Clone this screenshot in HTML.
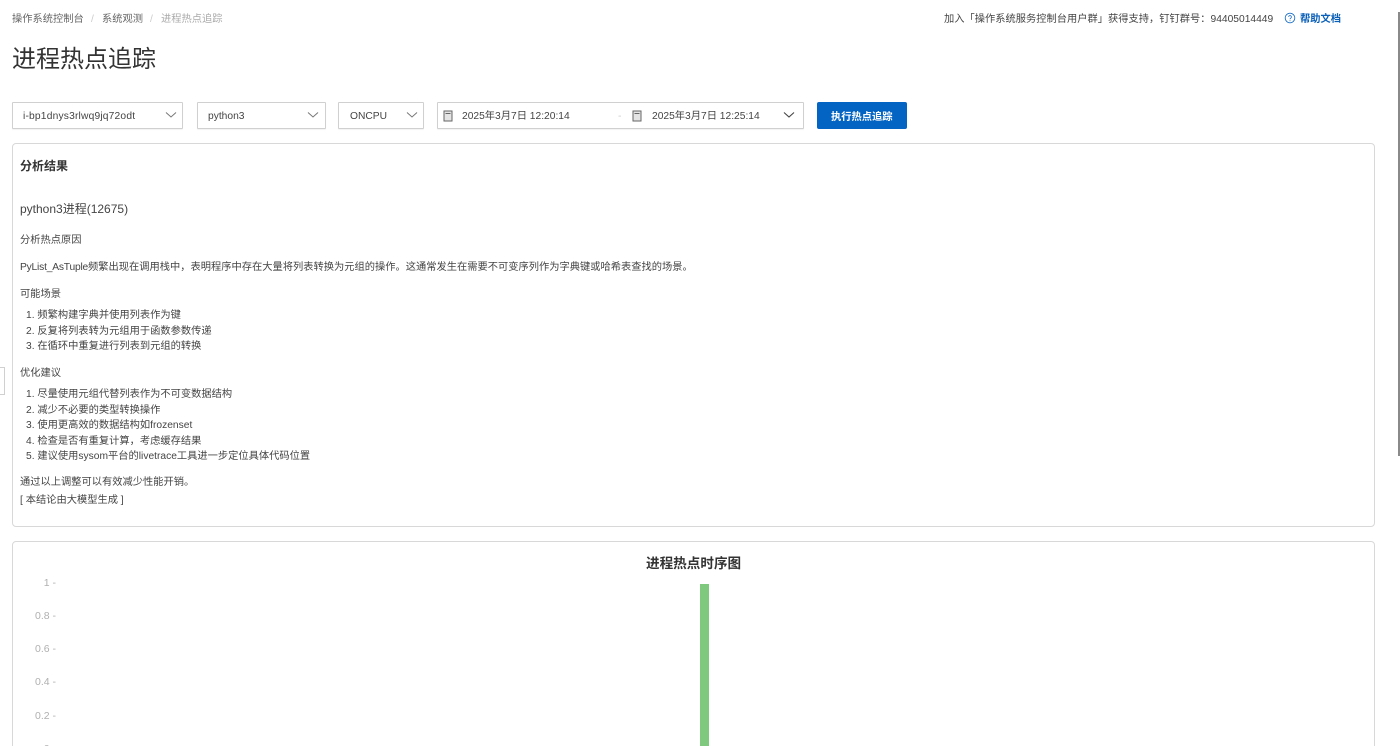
<!DOCTYPE html>
<html lang="zh-CN">
<head>
<meta charset="utf-8">
<title>进程热点追踪</title>
<style>
html,body{margin:0;padding:0;width:1400px;height:746px;overflow:hidden;background:#fff}
body{position:relative;font-family:"Liberation Sans","Noto Sans CJK SC",sans-serif;color:#333;font-size:10.25px}
.t{position:absolute;white-space:nowrap;line-height:16px;height:16px}
.box{position:absolute;box-sizing:border-box;border:1px solid #d0d0d0;background:#fff;border-radius:1px;box-shadow:0 1px 1px rgba(0,0,0,.05)}
.card{position:absolute;box-sizing:border-box;border:1px solid #d8d8d8;border-radius:4px;background:#fff}
svg{position:absolute;display:block}
.y{position:absolute;width:56px;text-align:right;color:#b0b0b0;font-size:10.5px;line-height:14px;left:0}
</style>
</head>
<body>
<div class="t" style="left:12px;top:12px;color:#666">操作系统控制台</div>
<div class="t" style="left:91px;top:12px;color:#ccc">/</div>
<div class="t" style="left:102px;top:12px;color:#666">系统观测</div>
<div class="t" style="left:150px;top:12px;color:#ccc">/</div>
<div class="t" style="left:161px;top:12px;color:#aaa">进程热点追踪</div>

<div class="t" style="left:944px;top:12px;color:#444">加入「操作系统服务控制台用户群」获得支持，钉钉群号：94405014449</div>
<svg style="left:1284px;top:12px" width="12" height="12" viewBox="0 0 12 12"><circle cx="6" cy="6" r="4.8" fill="none" stroke="#1b6fc9" stroke-width=".9"/><path d="M4.6 4.9a1.4 1.4 0 1 1 2.2 1.2c-.5.3-.8.6-.8 1.1" fill="none" stroke="#1b6fc9" stroke-width=".8"/><circle cx="6" cy="8.7" r=".5" fill="#1b6fc9"/></svg>
<div class="t" style="left:1300px;top:12px;color:#0a5fb8;font-weight:700">帮助文档</div>

<div class="t" style="left:12px;top:44px;font-size:24px;line-height:32px;height:32px;color:#333">进程热点追踪</div>

<div class="box" style="left:12px;top:102px;width:171px;height:27px"></div>
<div class="t" style="left:23px;top:109px;color:#444;letter-spacing:.18px">i-bp1dnys3rlwq9jq72odt</div>
<svg style="left:165px;top:111px" width="12" height="8" viewBox="0 0 12 8"><path d="M1 1.5l5 4.5 5-4.5" fill="none" stroke="#777" stroke-width="1"/></svg>

<div class="box" style="left:197px;top:102px;width:129px;height:27px"></div>
<div class="t" style="left:208px;top:109px;color:#444">python3</div>
<svg style="left:307px;top:111px" width="12" height="8" viewBox="0 0 12 8"><path d="M1 1.5l5 4.5 5-4.5" fill="none" stroke="#777" stroke-width="1"/></svg>

<div class="box" style="left:338px;top:102px;width:86px;height:27px"></div>
<div class="t" style="left:350px;top:109px;color:#444">ONCPU</div>
<svg style="left:406px;top:111px" width="12" height="8" viewBox="0 0 12 8"><path d="M1 1.5l5 4.5 5-4.5" fill="none" stroke="#777" stroke-width="1"/></svg>

<div class="box" style="left:437px;top:102px;width:367px;height:27px"></div>
<svg style="left:443px;top:110px" width="10" height="12" viewBox="0 0 10 12"><rect x="1" y="1" width="8" height="10" fill="#e4e4e4" stroke="#666" stroke-width="1"/><path d="M2.5 3.5h5" stroke="#666" stroke-width="1"/></svg>
<div class="t" style="left:462px;top:109px;color:#444">2025年3月7日 12:20:14</div>
<div class="t" style="left:618px;top:109px;color:#ccc">-</div>
<svg style="left:632px;top:110px" width="10" height="12" viewBox="0 0 10 12"><rect x="1" y="1" width="8" height="10" fill="#e4e4e4" stroke="#666" stroke-width="1"/><path d="M2.5 3.5h5" stroke="#666" stroke-width="1"/></svg>
<div class="t" style="left:652px;top:109px;color:#444">2025年3月7日 12:25:14</div>
<svg style="left:783px;top:111px" width="12" height="8" viewBox="0 0 12 8"><path d="M1 1.5l5 4.5 5-4.5" fill="none" stroke="#444" stroke-width="1.1"/></svg>

<div style="position:absolute;left:817px;top:102px;width:90px;height:27px;background:#0364c3;border-radius:2px"></div>
<div class="t" style="left:831px;top:110px;color:#fff;font-weight:700">执行热点追踪</div>

<div class="card" style="left:12px;top:143px;width:1363px;height:384px"></div>
<div class="t" style="left:20px;top:158px;font-size:12px;font-weight:700;color:#333">分析结果</div>
<div class="t" style="left:20px;top:201px;font-size:12px;color:#444">python3进程(12675)</div>
<div class="t" style="left:20px;top:233px;color:#444">分析热点原因</div>
<div class="t" style="left:20px;top:260px;color:#444"><span style="letter-spacing:-.2px">PyList_AsTuple</span>频繁出现在调用栈中，表明程序中存在大量将列表转换为元组的操作。这通常发生在需要不可变序列作为字典键或哈希表查找的场景。</div>
<div class="t" style="left:20px;top:287px;color:#444">可能场景</div>
<div class="t" style="left:26px;top:308px;color:#444">1. 频繁构建字典并使用列表作为键</div>
<div class="t" style="left:26px;top:324px;color:#444">2. 反复将列表转为元组用于函数参数传递</div>
<div class="t" style="left:26px;top:339px;color:#444">3. 在循环中重复进行列表到元组的转换</div>
<div class="t" style="left:20px;top:366px;color:#444">优化建议</div>
<div class="t" style="left:26px;top:387px;color:#444">1. 尽量使用元组代替列表作为不可变数据结构</div>
<div class="t" style="left:26px;top:403px;color:#444">2. 减少不必要的类型转换操作</div>
<div class="t" style="left:26px;top:418px;color:#444">3. 使用更高效的数据结构如frozenset</div>
<div class="t" style="left:26px;top:434px;color:#444">4. 检查是否有重复计算，考虑缓存结果</div>
<div class="t" style="left:26px;top:449px;color:#444">5. 建议使用sysom平台的livetrace工具进一步定位具体代码位置</div>
<div class="t" style="left:20px;top:475px;color:#444">通过以上调整可以有效减少性能开销。</div>
<div class="t" style="left:20px;top:493px;color:#444">[ 本结论由大模型生成 ]</div>

<div class="card" style="left:12px;top:541px;width:1363px;height:230px"></div>
<div class="t" style="left:646px;top:555px;font-size:13.6px;line-height:17px;height:17px;font-weight:700;color:#333">进程热点时序图</div>
<div class="y" style="top:576px">1 -</div>
<div class="y" style="top:609px">0.8 -</div>
<div class="y" style="top:642px">0.6 -</div>
<div class="y" style="top:675px">0.4 -</div>
<div class="y" style="top:709px">0.2 -</div>
<div class="y" style="top:742px">0 -</div>
<div style="position:absolute;left:700px;top:584px;width:9px;height:162px;background:#7fc97f"></div>

<div style="position:absolute;left:-1px;top:367px;width:6px;height:28px;box-sizing:border-box;border:1px solid #d0d0d0;background:#fff"></div>
<div style="position:absolute;left:1398px;top:12px;width:2px;height:444px;background:#8a8a8a"></div>
</body>
</html>
